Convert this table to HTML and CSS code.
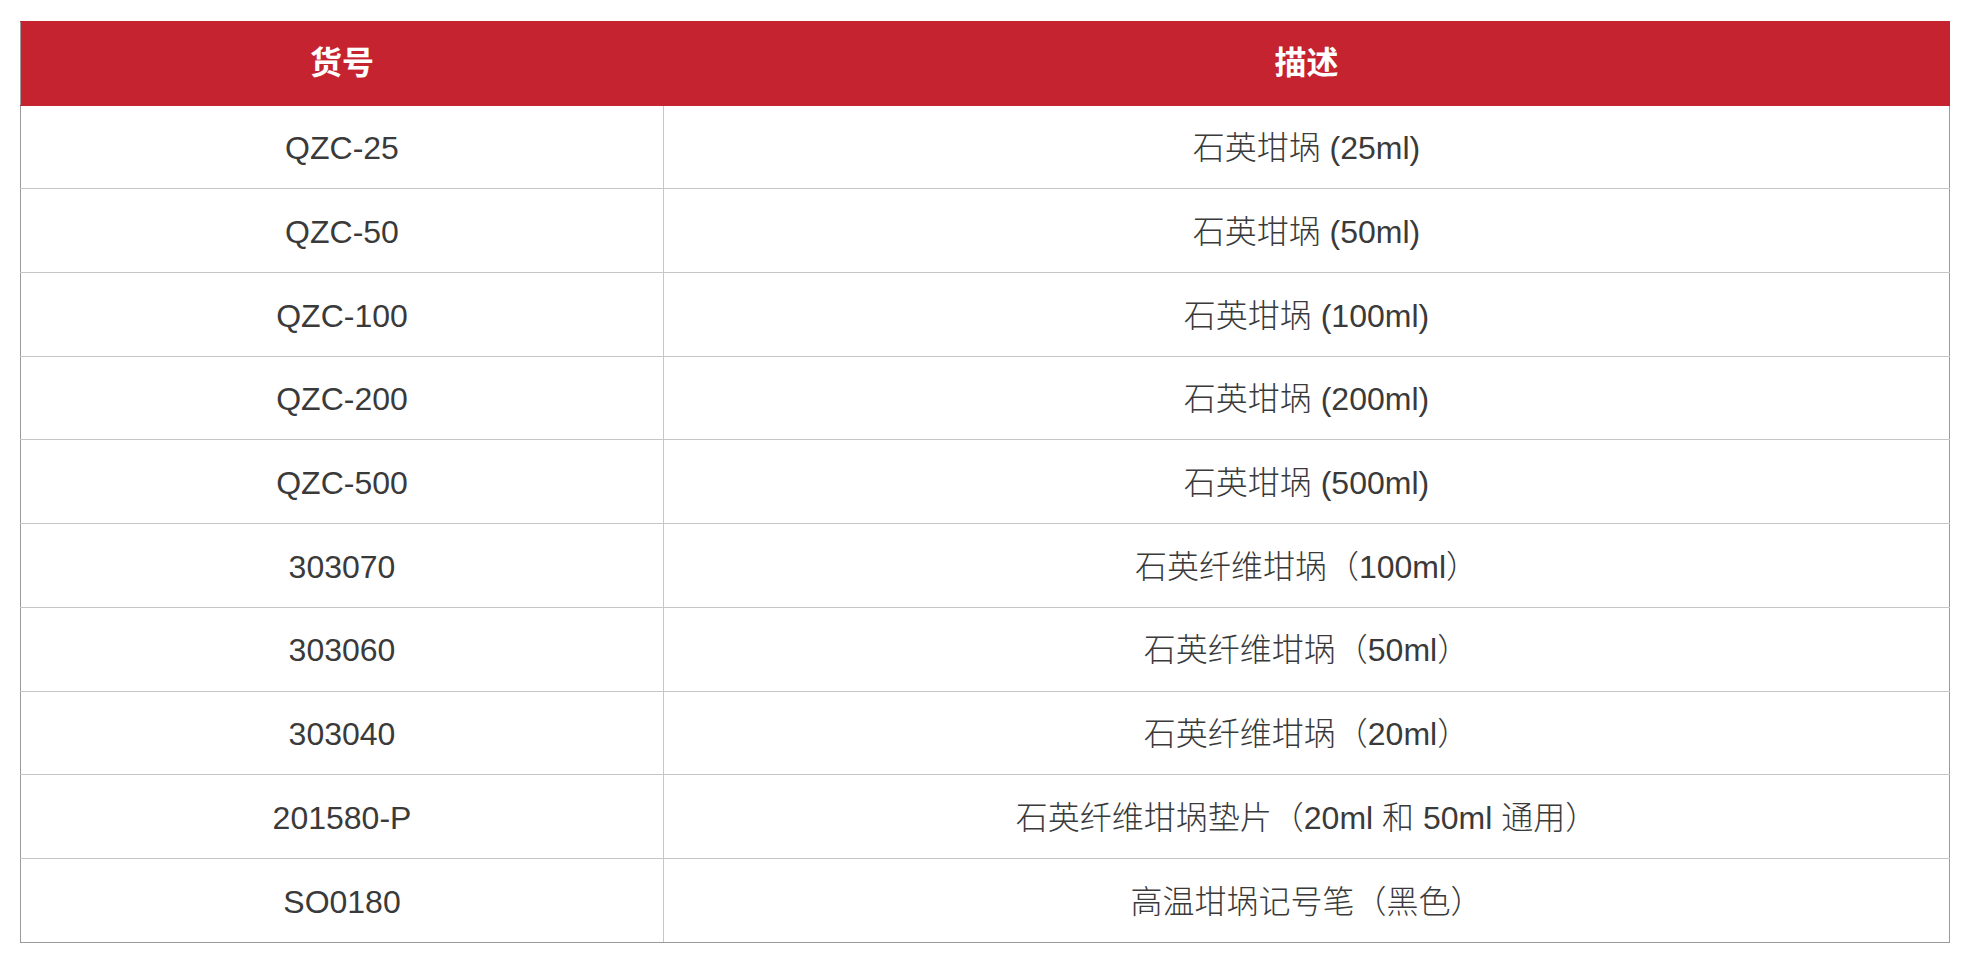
FILE: index.html
```html
<!DOCTYPE html>
<html lang="zh-CN">
<head>
<meta charset="utf-8">
<title>石英坩埚</title>
<link rel="stylesheet" href="styles.css">
</head>
<body>
<table class="spec">
  <thead>
    <tr><th class="c1">货号</th><th class="c2">描述</th></tr>
  </thead>
  <tbody>
    <tr><td>QZC-25</td><td>石英坩埚 (25ml)</td></tr>
    <tr><td>QZC-50</td><td>石英坩埚 (50ml)</td></tr>
    <tr><td>QZC-100</td><td>石英坩埚 (100ml)</td></tr>
    <tr><td>QZC-200</td><td>石英坩埚 (200ml)</td></tr>
    <tr><td>QZC-500</td><td>石英坩埚 (500ml)</td></tr>
    <tr><td>303070</td><td>石英纤维坩埚（100ml）</td></tr>
    <tr><td>303060</td><td>石英纤维坩埚（50ml）</td></tr>
    <tr><td>303040</td><td>石英纤维坩埚（20ml）</td></tr>
    <tr><td>201580-P</td><td>石英纤维坩埚垫片（20ml 和 50ml 通用）</td></tr>
    <tr><td>SO0180</td><td>高温坩埚记号笔（黑色）</td></tr>
  </tbody>
</table>
</body>
</html>
```
FILE: styles.css
```css
html, body {
  margin: 0;
  padding: 0;
  background: #ffffff;
}
body {
  padding: 21px 0 0 20px;
  font-family: "Liberation Sans", Arial, "Noto Sans CJK SC", sans-serif;
}
.spec {
  width: 1930px;
  border-collapse: collapse;
  table-layout: fixed;
  border: 1px solid #9a9a9a;
}
.spec .c1 { width: 33.333%; }
.spec .c2 { width: 66.667%; }
.spec th,
.spec td {
  height: 83.7px;
  padding: 3px 0 0 0;
  box-sizing: border-box;
  text-align: center;
  vertical-align: middle;
  font-size: 32px;
  line-height: 1.2;
  text-spacing-trim: space-all;
}
.spec th {
  background: #c5232f;
  color: #ffffff;
  font-weight: bold;
  padding-top: 0;
  border: 1px solid #c5232f;
  border-left: 1px solid #d87a80;
}
.spec th:first-child {
  border-left: 1px solid #9a9a9a;
}
.spec thead tr {
  border-top: 1px solid #9a9a9a;
}
.spec td {
  color: #3a3a3a;
  font-weight: 300;
  border: 1px solid #c6c6c6;
}
.spec td:first-child { border-left: 1px solid #9a9a9a; }
.spec td:last-child { border-right: 1px solid #9a9a9a; }
.spec tbody tr:last-child td { border-bottom: 1px solid #9a9a9a; }
```
